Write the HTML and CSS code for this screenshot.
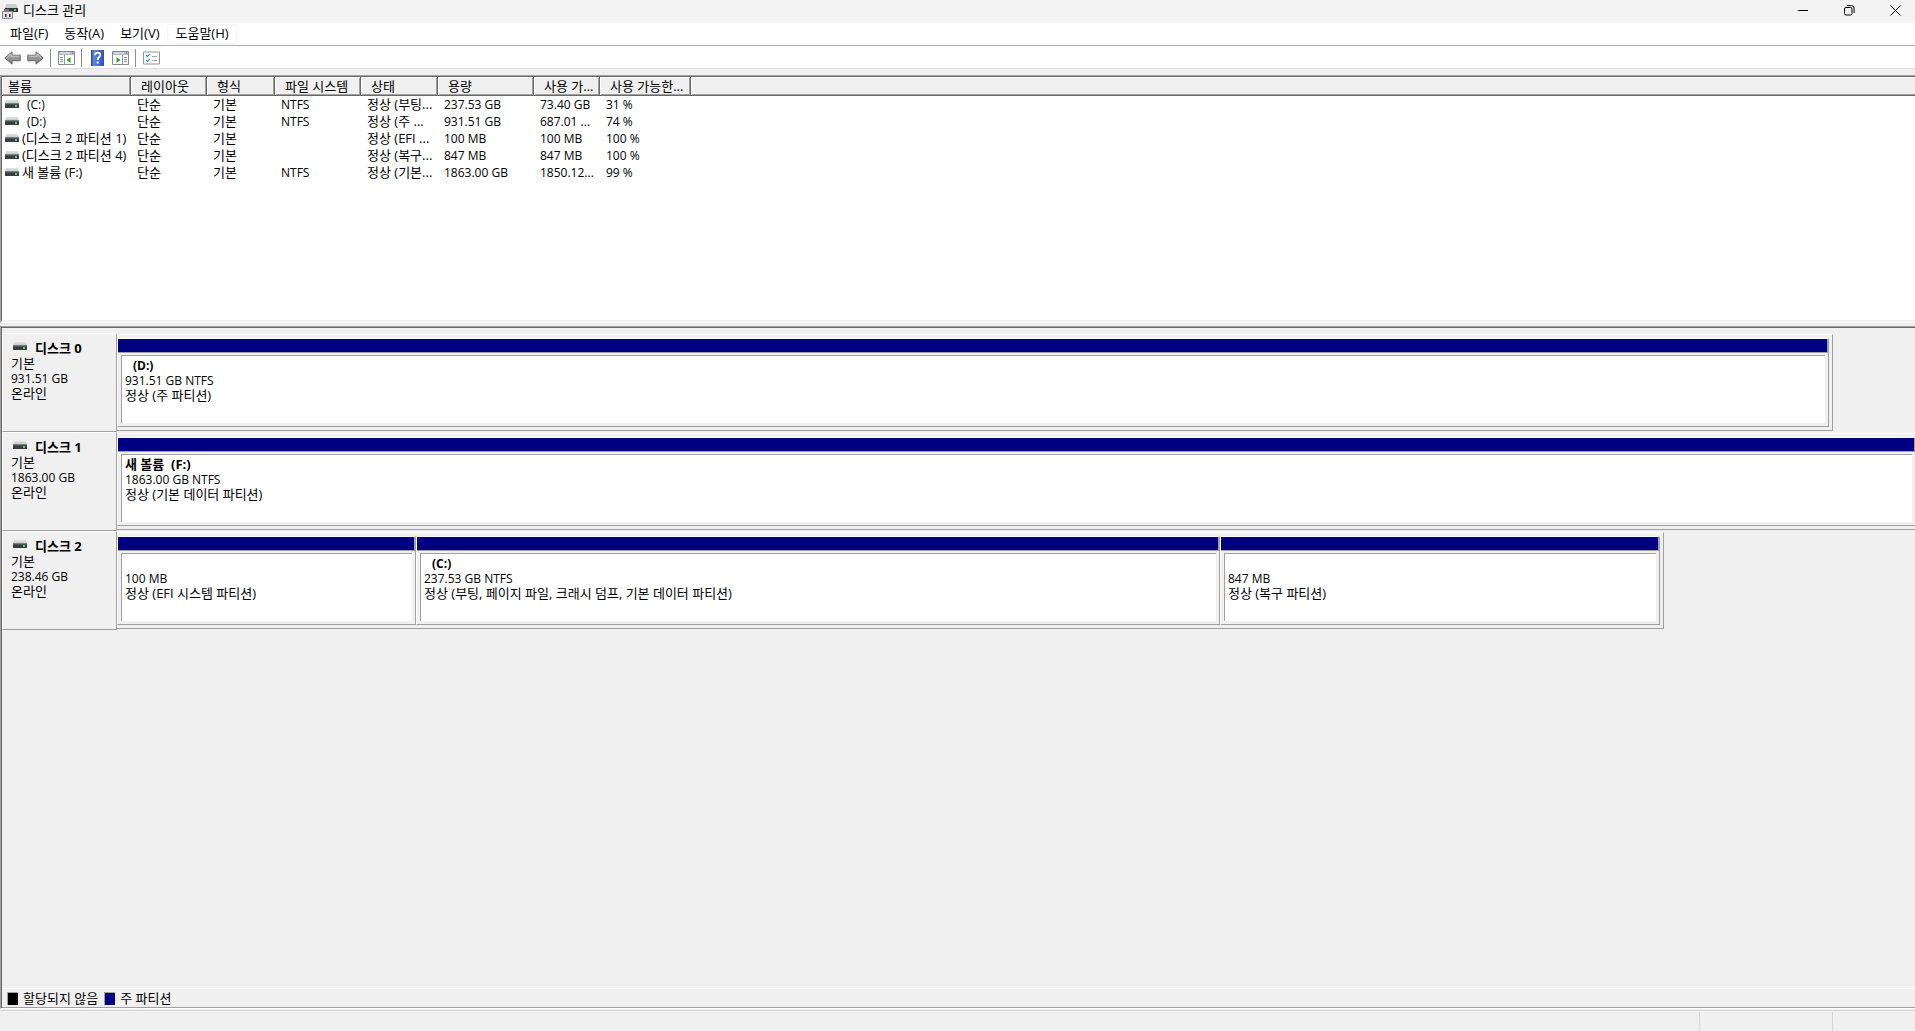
FILE: index.html
```html
<!DOCTYPE html>
<html lang="ko">
<head>
<meta charset="utf-8">
<title>디스크 관리</title>
<link rel="stylesheet" href="styles.css">
</head>
<body>
<svg class="defs" aria-hidden="true">
  <defs>
    <linearGradient id="lid" x1="0" y1="0" x2="0" y2="1"><stop offset="0" stop-color="#dfe2e6"/><stop offset="1" stop-color="#bfc3c9"/></linearGradient>
    <linearGradient id="steel" x1="0" y1="0" x2="0" y2="1"><stop offset="0" stop-color="#b8b8b8"/><stop offset="1" stop-color="#777"/></linearGradient>
    <linearGradient id="book" x1="0" y1="0" x2="1" y2="0"><stop offset="0" stop-color="#2440a0"/><stop offset=".2" stop-color="#5c83e0"/><stop offset="1" stop-color="#2f50bd"/></linearGradient>
    <symbol id="drive" viewBox="0 0 14 8">
      <path d="M1 0h12l1 4H0z" fill="url(#lid)"/>
      <path d="M0 3.500h14V8H0z" fill="#3b3e41"/>
      <path d="M0 3.500h14v.8H0z" fill="#777b80"/>
      <path d="M10 5h2v2h-2z" fill="#3fe04a"/>
    </symbol>
    <symbol id="arrow" viewBox="0 0 17 14">
      <path d="M.8 7 8 .8v3.400h8.200v5.600H8v3.400z" fill="url(#steel)" stroke="#666"/>
      <path d="M2.500 7 7 3v2.200h8" fill="none" stroke="#d2d2d2" stroke-width=".8"/>
    </symbol>
  </defs>
</svg>

<header class="titlebar">
  <svg class="app-icon" viewBox="0 0 16 15"><path d="M4 0h10l2 4H3z" fill="#c9ccd0"/><path d="M3 4h13v4H3z" fill="#36393c"/><path d="M12 5h2v2h-2z" fill="#3fe04a"/><path d="M2 5h5v3H2z" fill="#777"/><path d="M.5 7.500h10v7H.5z" fill="#e2e2e2" stroke="#888"/><path d="M3 10h1.500v3H3zM7 10h1.500v3H7z" fill="#333"/></svg>
  <h1 class="title">디스크 관리</h1>
  <div class="window-buttons">
    <button type="button" aria-label="최소화"><svg viewBox="0 0 11 11"><path d="M0 5.500h10"/></svg></button>
    <button type="button" aria-label="이전 크기로"><svg viewBox="0 0 11 11"><rect x=".5" y="2.500" width="7.500" height="7.500" rx="1.500"/><path d="M3 .6h4.500a2.600 2.600 0 0 1 2.600 2.600V8"/></svg></button>
    <button type="button" aria-label="닫기"><svg viewBox="0 0 11 11"><path d="m.5.5 10 10m0-10-10 10"/></svg></button>
  </div>
</header>

<nav class="menubar">
  <button type="button">파일(F)</button>
  <button type="button">동작(A)</button>
  <button type="button">보기(V)</button>
  <button type="button" class="hot">도움말(H)</button>
</nav>

<div class="toolbar" role="toolbar">
  <button type="button" aria-label="뒤로"><svg viewBox="0 0 17 14"><use href="#arrow"/></svg></button>
  <button type="button" aria-label="앞으로"><svg class="flip" viewBox="0 0 17 14"><use href="#arrow"/></svg></button>
  <span class="sep"></span>
  <button type="button" aria-label="콘솔 트리 표시"><svg viewBox="0 0 17 14"><path d="M.5.5h16v13H.5z" fill="#fff" stroke="#85888c"/><path d="M1 1h15v3H1z" fill="#b4bac2"/><path d="M2 2h10" stroke="#eee"/><path d="M14 2h1" stroke="#555"/><path d="M6.500 4v9M2 6.500h3M2 8.500h3M2 10.500h3" stroke="#8a97a8"/><path d="M12.500 6v6L8.500 9z" fill="#35a32a"/></svg></button>
  <span class="sep"></span>
  <button type="button" aria-label="도움말"><svg class="help" viewBox="0 0 13 16"><path d="M0 0h13v16H0z" fill="url(#book)"/><path d="M4 5.200C4 1.800 9.500 1.900 9.300 5 9.200 7 6.600 7.200 6.700 10" fill="none" stroke="#fff" stroke-width="1.800"/><path d="M5.700 11.500h2v2h-2z" fill="#fff"/></svg></button>
  <button type="button" aria-label="작업 창 표시"><svg viewBox="0 0 17 14"><path d="M.5.5h16v13H.5z" fill="#fff" stroke="#85888c"/><path d="M1 1h15v3H1z" fill="#b4bac2"/><path d="M2 2h10" stroke="#eee"/><path d="M14 2h1" stroke="#555"/><path d="M10.500 4v9M12 6.500h3M12 8.500h3M12 10.500h3" stroke="#8a97a8"/><path d="M4.500 6v6l4-3z" fill="#35a32a"/></svg></button>
  <span class="sep"></span>
  <button type="button" aria-label="설정"><svg viewBox="0 0 17 14"><path d="M.5 1h16v12H.5z" fill="#fff" stroke="#8f9499"/><path d="m3 4 1.500 1.500L7 2.800M3 9l1.500 1.500L7 7.800" fill="none" stroke="#2b8fe0" stroke-width="1.200"/><path d="M9 5.500h5M9 9.500h5" stroke="#a9a9a9"/></svg></button>
</div>

<section class="frame list-frame">
  <div class="frame-inner list">
    <table class="volumes">
      <colgroup><col class="c-name"><col class="c-layout"><col class="c-type"><col class="c-fs"><col class="c-state"><col class="c-size"><col class="c-free"><col class="c-pct"><col></colgroup>
      <thead><tr><th>볼륨</th><th>레이아웃</th><th>형식</th><th>파일 시스템</th><th>상태</th><th>용량</th><th>사용 가...</th><th>사용 가능한...</th><th class="rest"></th></tr></thead>
      <tbody>
        <tr><td><svg class="drive" viewBox="0 0 14 8"><use href="#drive"/></svg><span class="num unnamed">(C:)</span></td><td>단순</td><td>기본</td><td class="num">NTFS</td><td>정상 (부팅...</td><td class="num">237.53 GB</td><td class="num">73.40 GB</td><td class="num">31 %</td><td></td></tr>
        <tr><td><svg class="drive" viewBox="0 0 14 8"><use href="#drive"/></svg><span class="num unnamed">(D:)</span></td><td>단순</td><td>기본</td><td class="num">NTFS</td><td>정상 (주 ...</td><td class="num">931.51 GB</td><td class="num">687.01 ...</td><td class="num">74 %</td><td></td></tr>
        <tr><td><svg class="drive" viewBox="0 0 14 8"><use href="#drive"/></svg>(디스크 2 파티션 1)</td><td>단순</td><td>기본</td><td></td><td>정상 (EFI ...</td><td class="num">100 MB</td><td class="num">100 MB</td><td class="num">100 %</td><td></td></tr>
        <tr><td><svg class="drive" viewBox="0 0 14 8"><use href="#drive"/></svg>(디스크 2 파티션 4)</td><td>단순</td><td>기본</td><td></td><td>정상 (복구...</td><td class="num">847 MB</td><td class="num">847 MB</td><td class="num">100 %</td><td></td></tr>
        <tr><td><svg class="drive" viewBox="0 0 14 8"><use href="#drive"/></svg>새 볼륨 (F:)</td><td>단순</td><td>기본</td><td class="num">NTFS</td><td>정상 (기본...</td><td class="num">1863.00 GB</td><td class="num">1850.12...</td><td class="num">99 %</td><td></td></tr>
      </tbody>
    </table>
  </div>
</section>
<div class="splitter"></div>

<main class="frame graph-frame">
  <div class="frame-inner graph">
    <div class="disks">
      <section class="disk">
        <div class="disk-info">
          <h2><svg class="drive" viewBox="0 0 14 8"><use href="#drive"/></svg>디스크 0</h2>
          <p>기본</p><p class="num">931.51 GB</p><p>온라인</p>
        </div>
        <div class="track">
          <div class="strip" style="width:95.44%">
            <article class="volume"><div class="bar"></div><div class="body"><h3 class="num unnamed">(D:)</h3><p class="num">931.51 GB NTFS</p><p>정상 (주 파티션)</p></div></article>
          </div>
        </div>
      </section>
      <section class="disk">
        <div class="disk-info">
          <h2><svg class="drive" viewBox="0 0 14 8"><use href="#drive"/></svg>디스크 1</h2>
          <p>기본</p><p class="num">1863.00 GB</p><p>온라인</p>
        </div>
        <div class="track">
          <div class="strip" style="width:100.28%">
            <article class="volume"><div class="bar"></div><div class="body"><h3>새 볼륨 &nbsp;(F:)</h3><p class="num">1863.00 GB NTFS</p><p>정상 (기본 데이터 파티션)</p></div></article>
          </div>
        </div>
      </section>
      <section class="disk">
        <div class="disk-info">
          <h2><svg class="drive" viewBox="0 0 14 8"><use href="#drive"/></svg>디스크 2</h2>
          <p>기본</p><p class="num">238.46 GB</p><p>온라인</p>
        </div>
        <div class="track">
          <div class="strip" style="width:86.04%">
            <article class="volume" style="flex-grow:297"><div class="bar"></div><div class="body"><h3></h3><p class="num">100 MB</p><p>정상 (EFI 시스템 파티션)</p></div></article>
            <article class="volume" style="flex-grow:802"><div class="bar"></div><div class="body"><h3 class="num unnamed">(C:)</h3><p class="num">237.53 GB NTFS</p><p>정상 (부팅, 페이지 파일, 크래시 덤프, 기본 데이터 파티션)</p></div></article>
            <article class="volume" style="flex-grow:438"><div class="bar"></div><div class="body"><h3></h3><p class="num">847 MB</p><p>정상 (복구 파티션)</p></div></article>
          </div>
        </div>
      </section>
    </div>
    <div class="legend">
      <span class="key"><i class="swatch unallocated"></i>할당되지 않음</span>
      <span class="key"><i class="swatch primary"></i>주 파티션</span>
    </div>
  </div>
</main>

<footer class="statusbar"><span class="cell main-cell"></span><span class="cell mid-cell"></span><span class="cell end-cell"></span></footer>
</body>
</html>
```
FILE: styles.css
```css
:root {
  --face: #f0f0f0;
  --light: #fff;
  --shadow: #a0a0a0;
  --dark: #696969;
  --primary: #000080;
}

* { box-sizing: border-box; }

body {
  margin: 0;
  height: 100vh;
  display: flex;
  flex-direction: column;
  overflow: hidden;
  background: var(--face);
  color: #000;
  font: 13px/15px "Open Sans", "Noto Sans CJK KR", sans-serif;
}

h1, h2, h3, p { margin: 0; font-size: inherit; }
button { border: 0; padding: 0; background: none; color: inherit; font: inherit; }
svg { display: block; }
.defs { position: absolute; width: 0; height: 0; }
.num { font-size: 12px; }

/* Title bar */
.titlebar {
  flex: none;
  height: 23px;
  display: flex;
  align-items: center;
  padding: 0 0 2px 2px;
  background: #f3f3f3;
}
.app-icon { width: 16px; height: 15px; margin-top: 2px; }
.title { flex: 1; padding-left: 5px; font-weight: 400; }
.window-buttons { display: flex; gap: 6px; }
.window-buttons button { width: 40px; height: 20px; display: grid; place-items: center; }
.window-buttons svg { width: 11px; height: 11px; fill: none; stroke: #000; }

/* Menu bar */
.menubar {
  flex: none;
  height: 23px;
  display: flex;
  align-items: center;
  padding: 0 2px;
  background: #fff;
  border-bottom: 1px solid #b0b0b0;
}
.menubar button { height: 20px; padding: 0 8px 2px; border-radius: 4px; }
.menubar .hot { box-shadow: inset 0 0 0 1px #f3f4f6; }

/* Tool bar */
.toolbar {
  flex: none;
  height: 23px;
  display: flex;
  align-items: center;
  padding: 2px 0 0 1px;
  background: #fff;
  border-bottom: 1px solid #dcdcdc;
}
.toolbar button { width: 23px; height: 20px; display: grid; place-items: center; }
.toolbar svg { width: 17px; height: 14px; }
.toolbar svg.help { width: 13px; height: 16px; }
.toolbar .flip { transform: scaleX(-1); }
.sep { width: 1px; height: 18px; margin: 0 4px 0 3px; background: #909090; }

/* Sunken frames */
.frame { border-left: 1px solid var(--shadow); border-top: 1px solid var(--shadow); }
.frame-inner { border-left: 1px solid var(--dark); border-top: 1px solid var(--dark); }
.list-frame { flex: none; margin-top: 6px; border-bottom: 1px solid var(--light); }
.list { height: 246px; background: #fff; border-bottom: 2px solid var(--face); }
.splitter { flex: none; height: 3px; border-top: 1px solid #e3e3e3; }

/* Volume list */
.volumes { width: 100%; table-layout: fixed; border-collapse: separate; border-spacing: 0; }
.c-name { width: 129px; }
.c-layout { width: 76px; }
.c-type { width: 68px; }
.c-fs { width: 86px; }
.c-state { width: 77px; }
.c-size { width: 96px; }
.c-free { width: 66px; }
.c-pct { width: 91px; }
.volumes th, .volumes td { white-space: nowrap; text-align: left; }
.volumes th {
  height: 19px;
  padding: 0 0 0 10px;
  background: var(--face);
  border-right: 1px solid var(--dark);
  border-bottom: 1px solid var(--dark);
  box-shadow: inset 1px 1px var(--light), inset -1px -1px var(--shadow);
  font-weight: 400;
}
.volumes th:first-child { padding-left: 6px; }
.volumes th.rest { border-right: 0; box-shadow: inset 1px 1px var(--light), inset 0 -1px var(--shadow); }
.volumes td { height: 17px; padding: 0 0 0 6px; }
.volumes td:first-child { padding: 0 0 0 3px; }
.volumes .drive { display: inline-block; vertical-align: 1px; margin-right: 3px; }
.volumes .unnamed { padding-left: 5px; }
.drive { width: 14px; height: 8px; }

/* Disk graph */
.graph-frame { flex: 1; min-height: 0; border-bottom: 1px solid var(--light); }
.graph { height: 100%; display: flex; flex-direction: column; }
.disks { flex: 1; min-height: 0; overflow: hidden; padding-top: 5px; }
.disk { display: flex; }
.disk-info {
  flex: none;
  width: 115px;
  padding: 7px 0 23px 8px;
  border: 1px solid var(--light);
  border-right-color: var(--shadow);
  border-bottom-color: var(--shadow);
}
.disk-info h2 { display: flex; align-items: flex-start; gap: 8px; padding-left: 2px; }
.disk-info .drive { margin-top: 1px; }
.track { flex: 1; min-width: 0; overflow: hidden; padding: 1px 0; }
.strip {
  display: flex;
  padding: 3px 3px 3px 0;
  border: solid var(--shadow);
  border-width: 1px 1px 1px 0;
  border-top-color: var(--light);
}
.volume {
  flex: 1 1 0;
  min-width: 0;
  border: 1px solid var(--light);
  border-right-color: var(--shadow);
  border-bottom-color: var(--shadow);
  padding-bottom: 3px;
}
.bar {
  height: 14px;
  background: var(--primary);
  border-right: 1px solid var(--shadow);
  border-bottom: 1px solid var(--shadow);
}
.body {
  height: 68px;
  margin: 2px 3px 0;
  padding: 2px 3px;
  background: #fff;
  border: solid var(--shadow);
  border-width: 1px 0 0 1px;
  white-space: nowrap;
  overflow: hidden;
}
.body h3 { height: 15px; }
.body .unnamed { padding-left: 8px; }

/* Legend */
.legend {
  flex: none;
  height: 20px;
  display: flex;
  align-items: center;
  gap: 6px;
  padding-left: 5px;
  border-top: 1px solid var(--light);
  border-bottom: 1px solid var(--shadow);
}
.key { display: flex; align-items: center; gap: 5px; }
.swatch { width: 11px; height: 13px; border: solid var(--shadow); border-width: 1px 0 0 1px; }
.unallocated { background: #000; }
.primary { background: var(--primary); }

/* Status bar */
.statusbar { flex: none; height: 21px; margin-top: 1px; display: flex; border-top: 1px solid #d4d4d4; }
.cell { margin-top: 1px; border-right: 1px solid #d4d4d4; }
.main-cell { flex: 1; }
.mid-cell { width: 133px; }
.end-cell { width: 82px; border-right: 0; }
```
